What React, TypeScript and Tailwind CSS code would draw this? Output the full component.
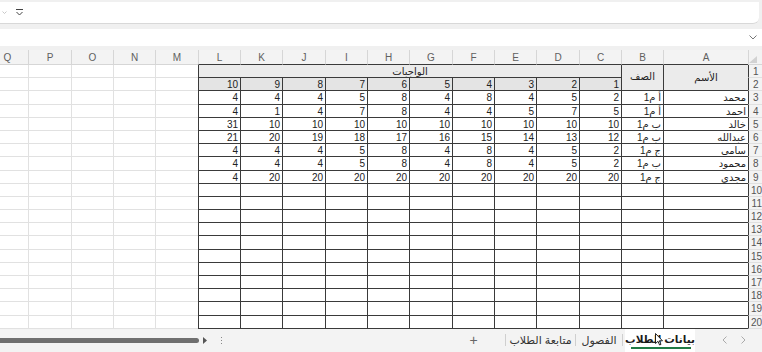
import type { ReactElement } from "react";

const letters = ['A', 'B', 'C', 'D', 'E', 'F', 'G', 'H', 'I', 'J', 'K', 'L', 'M', 'N', 'O', 'P', 'Q']

const students: [string, string, number[]][] = [
  ['محمد', '1م أ', [2, 5, 4, 8, 4, 8, 5, 4, 4, 4]],
  ['احمد', '1م أ', [5, 7, 5, 4, 4, 8, 7, 4, 1, 4]],
  ['خالد', '1م ب', [10, 10, 10, 10, 10, 10, 10, 10, 10, 31]],
  ['عبدالله', '1م ب', [12, 13, 14, 15, 16, 17, 18, 19, 20, 21]],
  ['سامي', '1م ج', [2, 5, 4, 8, 4, 8, 5, 4, 4, 4]],
  ['محمود', '1م ب', [2, 5, 4, 8, 4, 8, 5, 4, 4, 4]],
  ['مجدي', '1م ج', [20, 20, 20, 20, 20, 20, 20, 20, 20, 4]],
]

const tbl = 'border-b border-l border-[#3a3a3a] bg-white'
const out = 'border-b border-l border-[#e1e1e1] bg-white'
const txt = 'pr-[2px] text-right text-[10px] leading-[13px] text-[#222]'

const Sheet = () => {
  const cells: ReactElement[] = []

  cells.push(
    <div key="corner" className="flex items-start justify-end border-b border-l border-[#d6d6d6] bg-[#f3f3f3] pt-[6px] pr-[1px]">
      <svg width="8" height="7" viewBox="0 0 8 7"><path d="M8 0L8 7L0 7Z" fill="#d2d2d2" /></svg>
    </div>
  )
  letters.forEach((l, i) => {
    cells.push(
      <div
        key={'h' + l}
        className={`flex items-center justify-center border-b border-l bg-[#f3f3f3] text-[10px] text-[#606060] ${i < 12 ? 'border-l-[#d6d6d6] border-b-[#3a3a3a]' : 'border-[#d6d6d6]'}`}
      >
        {l}
      </div>
    )
  })

  for (let r = 1; r <= 20; r++) {
    cells.push(
      <div key={'rh' + r} className="overflow-hidden whitespace-nowrap border-b border-l border-b-[#e0e0e0] border-l-[#3a3a3a] bg-[#f3f3f3] pl-[4px] text-left text-[10px] leading-[13px] text-[#555]">
        {r}
      </div>
    )
    if (r === 1) {
      cells.push(
        <div key="a1" className="row-span-2 flex items-center justify-center border-b border-l border-[#3a3a3a] bg-[#ebebeb] text-[10px] text-[#222]">الأسم</div>,
        <div key="b1" className="row-span-2 flex items-start justify-center border-b border-l border-[#3a3a3a] bg-[#ebebeb] pt-[4px] text-[10px] text-[#222]">الصف</div>,
        <div key="c1" className="col-span-10 flex items-center justify-center border-b border-l border-[#3a3a3a] bg-[#ebebeb] text-[10px] text-[#222]">الواجبات</div>
      )
    } else if (r === 2) {
      for (let c = 1; c <= 10; c++) {
        cells.push(
          <div key={'n' + c} className={`border-b border-l border-[#3a3a3a] bg-[#e4e4e4] ${txt}`}>{c}</div>
        )
      }
    } else {
      const s = students[r - 3]
      cells.push(
        <div key={'a' + r} className={`${tbl} ${txt}`}>{s ? s[0] : ''}</div>,
        <div key={'b' + r} className={`${tbl} ${txt}`}>
          {s ? <span dir="ltr" className="[unicode-bidi:bidi-override]">{s[1]}</span> : ''}
        </div>
      )
      for (let c = 0; c < 10; c++) {
        cells.push(
          <div key={'v' + r + '-' + c} className={`${tbl} ${txt}`}>{s ? s[2][c] : ''}</div>
        )
      }
    }
    for (let c = 12; c < 17; c++) {
      cells.push(<div key={'o' + r + '-' + c} className={out} />)
    }
  }

  return (
    <div dir="rtl" className="overflow-hidden bg-white">
      <div className="grid w-max grid-cols-[14px_85px_42px_42px_43px_42px_42px_43px_42px_42px_43px_42px_42px_43px_42px_42px_43px_42px] grid-rows-[15px_repeat(20,13.2px)]">
        {cells}
      </div>
    </div>
  )
}

const SheetTabs = () => (
  <div className="flex h-[23px] items-center whitespace-nowrap bg-[#f3f3f3] text-[11px] text-[#333]">
    <div className="flex flex-1 items-center">
      <div className="h-[5px] w-[199px] rounded-r-full bg-[#6f6f6f]" />
      <svg className="ml-[4px]" width="4" height="7" viewBox="0 0 4 7"><path d="M0 0L4 3.5L0 7Z" fill="#555" /></svg>
      <div className="ml-[14px] flex flex-col gap-[2px]">
        <span className="h-[1px] w-[1px] bg-[#888]" />
        <span className="h-[1px] w-[1px] bg-[#888]" />
        <span className="h-[1px] w-[1px] bg-[#888]" />
      </div>
    </div>
    <div className="w-[23px] text-center text-[14px] leading-none text-[#666]">+</div>
    <div className="w-[20px]" />
    <div className="h-[12px] w-px bg-[#cfcfcf]" />
    <div className="w-[69px] text-center">متابعة الطلاب</div>
    <div className="h-[12px] w-px bg-[#cfcfcf]" />
    <div className="w-[46px] text-center">الفصول</div>
    <div className="h-[12px] w-px bg-[#cfcfcf]" />
    <div className="relative ml-[2px] flex h-full w-[70px] items-center justify-center bg-white text-[10.5px] font-bold text-[#1a1a1a]">
      بيانات الطلاب
      <div className="absolute bottom-[3px] left-[6px] right-[4px] h-[2px] bg-[#1f7a44]" />
      <svg className="absolute left-[30px] top-[4px]" width="8" height="13" viewBox="0 0 8 13">
        <path d="M0.5 0.5L0.5 10.5L3 8.3L4.6 12L6 11.4L4.4 7.8L7.5 7.8Z" fill="#fff" stroke="#111" strokeWidth="0.9" />
      </svg>
    </div>
    <div className="flex w-[67px] items-center justify-end gap-[14px] pr-[16px]">
      <svg width="5" height="8" viewBox="0 0 5 8"><path d="M4.5 0.5L1 4L4.5 7.5" fill="none" stroke="#aaa" strokeWidth="1" /></svg>
      <svg width="5" height="8" viewBox="0 0 5 8"><path d="M0.5 0.5L4 4L0.5 7.5" fill="none" stroke="#aaa" strokeWidth="1" /></svg>
    </div>
  </div>
)

const App = () => {
  return (
    <div className="h-[352px] w-[762px] overflow-hidden bg-[#f0f0f0] font-['Liberation_Sans','DejaVu_Sans',sans-serif]">
      <div className="h-[2px]" />
      <div className="mr-[3px] flex h-[22px] items-center gap-[9px] rounded-br-[6px] border-b border-[#d8d8d8] bg-white pl-[2px]">
        <svg width="5" height="3" viewBox="0 0 5 3"><path d="M0.5 0.5L2.5 2.5L4.5 0.5" fill="none" stroke="#bbb" strokeWidth="0.8" /></svg>
        <svg width="7" height="7" viewBox="0 0 7 7"><path d="M0 0.5H7" stroke="#444" strokeWidth="1" /><path d="M0.5 3L3.5 6L6.5 3" fill="none" stroke="#444" strokeWidth="1" /></svg>
      </div>
      <div className="h-[5px]" />
      <div className="flex h-[17px] items-center justify-end bg-white pr-[5px]">
        <svg width="8" height="5" viewBox="0 0 8 5"><path d="M0.5 0.5L4 4L7.5 0.5" fill="none" stroke="#777" strokeWidth="1" /></svg>
      </div>
      <div className="h-[4px]" />
      <Sheet />
      <SheetTabs />
    </div>
  )
}

export default App
